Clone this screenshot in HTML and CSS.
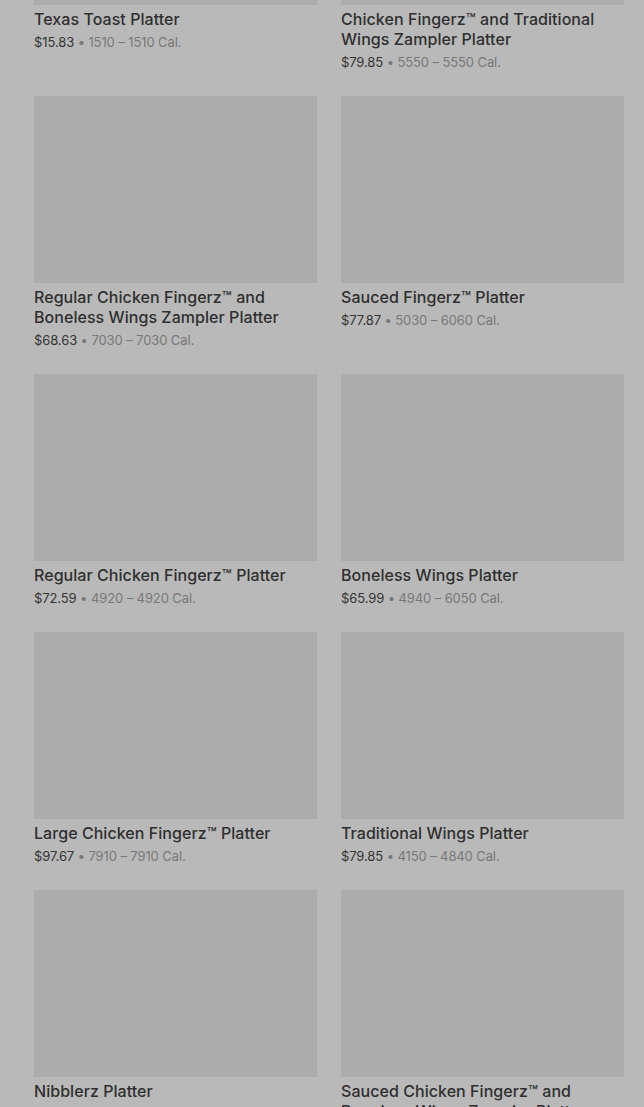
FILE: index.html
```html
<!DOCTYPE html>
<html lang="en">
<head>
    <meta charset="UTF-8">
    <meta name="viewport" content="width=device-width, initial-scale=1.0">
    <title>Platters</title>
    <link rel="stylesheet" href="styles.css">
</head>
<body>
<main>
    <div id="menu-list" class="grid-container"></div>
</main>

<script>
const items = [
    {name: "Texas Toast Platter", price: "15.83", cal: "1510 – 1510"},
    {name: "Chicken Fingerz™ and Traditional Wings Zampler Platter", price: "79.85", cal: "5550 – 5550"},
    {name: "Regular Chicken Fingerz™ and Boneless Wings Zampler Platter", price: "68.63", cal: "7030 – 7030"},
    {name: "Sauced Fingerz™ Platter", price: "77.87", cal: "5030 – 6060"},
    {name: "Regular Chicken Fingerz™ Platter", price: "72.59", cal: "4920 – 4920"},
    {name: "Boneless Wings Platter", price: "65.99", cal: "4940 – 6050"},
    {name: "Large Chicken Fingerz™ Platter", price: "97.67", cal: "7910 – 7910"},
    {name: "Traditional Wings Platter", price: "79.85", cal: "4150 – 4840"},
    {name: "Nibblerz Platter", price: "49.99", cal: "3400 – 3400"},
    {name: "Sauced Chicken Fingerz™ and Boneless Wings Zampler Platter", price: "74.23", cal: "6020 – 6020"}
];

function displayItems() {
    const list = document.getElementById("menu-list");
    list.innerHTML = items.map(p => `
        <div class="item">
            <div class="item-img"></div>
            <h3>${p.name}</h3>
            <p><span class="price">$${p.price}</span> • ${p.cal} Cal.</p>
        </div>
    `).join('');
}

displayItems();
</script>
</body>
</html>
```

FILE: styles.css
```css
body {
    margin: 0;
    font-family: Inter, "Noto Sans", sans-serif;
    background-color: #b9b9b9;
    overflow: hidden;
}
main {
    padding: 0 20px 0 34px;
}
.grid-container {
    display: grid;
    grid-template-columns: 1fr 1fr;
    column-gap: 24px;
    row-gap: 24px;
    margin-top: -182px;
}
.item-img {
    height: 187px;
    background: #acacac;
}
.item h3 {
    margin: 4px 0 0;
    font-size: 16px;
    line-height: 20px;
    font-weight: 500;
    color: #2f2f2f;
    letter-spacing: 0.05px;
}
.item p {
    margin: 3px 0 0;
    font-size: 13px;
    line-height: 20px;
    color: #787878;
    letter-spacing: -0.1px;
}
.price {
    color: #353535;
}
```
